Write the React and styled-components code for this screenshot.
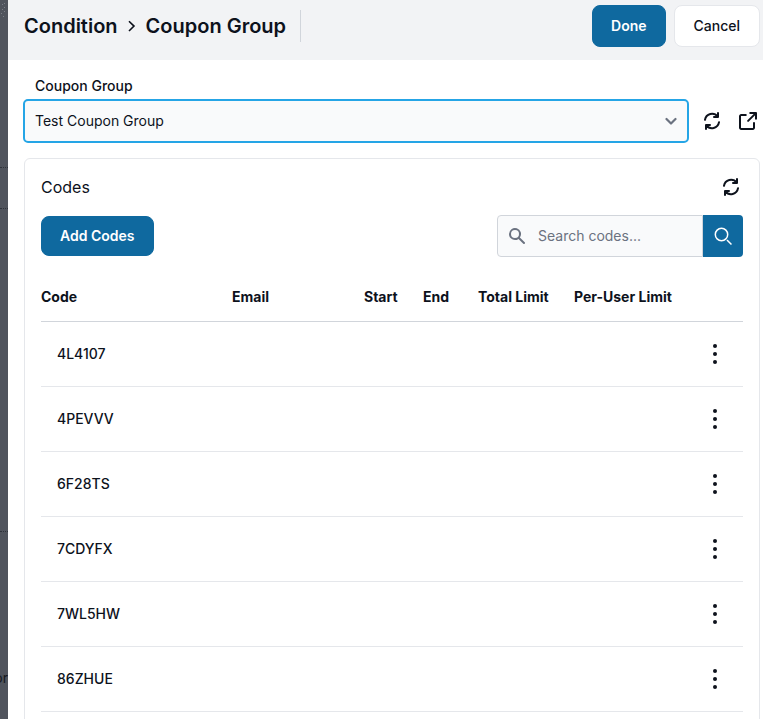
import React, { useState } from 'react';
import styled, { createGlobalStyle } from 'styled-components';

const GlobalStyle = createGlobalStyle`
    *, *::before, *::after {
        box-sizing: border-box;
    }

    body {
        margin: 0;
        font-family: Inter, "Liberation Sans", sans-serif;
        font-size: 14px;
        line-height: 20px;
        color: #0d121c;
        background-color: #ffffff;
    }

    button, input, select {
        font: inherit;
        color: inherit;
    }
`;

const Page = styled.div`
    display: grid;
    grid-template-columns: 8px minmax(0, 1fr);
    height: 100vh;
    overflow: hidden;
`;

const Backdrop = styled.div`
    display: flex;
    flex-direction: column;
    overflow: hidden;
    background-color: #50545d;
`;

const BackdropRow = styled.div`
    flex: none;
    height: ${props => props.$height};
    border-bottom: 1px dotted #2f333b;
`;

const BackdropText = styled.span`
    align-self: flex-end;
    padding-top: 136px;
    font-size: 14px;
    color: #16191f;
`;

const Drawer = styled.main`
    display: flex;
    flex-direction: column;
    min-width: 0;
    height: 100vh;
`;

const Header = styled.header`
    display: flex;
    align-items: flex-start;
    justify-content: space-between;
    flex: none;
    padding: 5px 3px 13px 16px;
    background-color: #f2f3f5;
`;

const Breadcrumb = styled.nav`
    display: flex;
    align-items: center;
    gap: 6px;
    height: 42px;
`;

const Title = styled.h1`
    margin: 0;
    font-size: 20px;
    font-weight: 600;
    line-height: 28px;
    white-space: nowrap;
`;

const Divider = styled.span`
    width: 1px;
    height: 32px;
    margin-left: 8px;
    background-color: #d1d5db;
`;

const Actions = styled.div`
    display: flex;
    gap: 8px;
`;

const Button = styled.button`
    height: ${props => props.$height || '42px'};
    padding: 0 ${props => (props.$primary ? '18px' : '19px')};
    border: 1px solid ${props => (props.$primary ? '#0f699f' : '#e5e7eb')};
    border-radius: 8px;
    background-color: ${props => (props.$primary ? '#0f699f' : '#ffffff')};
    color: ${props => (props.$primary ? '#ffffff' : '#0d121c')};
    font-weight: ${props => (props.$primary ? 600 : 500)};
    white-space: nowrap;
    cursor: pointer;
`;

const IconButton = styled.button`
    display: flex;
    padding: 0;
    border: none;
    background: none;
    cursor: pointer;
`;

const Content = styled.div`
    flex: 1;
    min-height: 0;
    padding: 16px 3px 16px 16px;
    overflow-y: auto;
    scrollbar-width: none;
`;

const Label = styled.label`
    display: block;
    padding: 0 11px;
    margin-bottom: 3px;
    font-weight: 500;
`;

const FieldRow = styled.div`
    display: flex;
    align-items: center;
    gap: 12px;
    margin-bottom: 15px;
`;

const SelectWrap = styled.div`
    position: relative;
    flex: 1;
    margin: 0 -1px;

    svg {
        position: absolute;
        top: 16px;
        right: 12px;
        pointer-events: none;
    }
`;

const Select = styled.select`
    appearance: none;
    display: block;
    width: 100%;
    height: 44px;
    padding: 0 36px 0 10px;
    border: 2px solid #25a5e6;
    border-radius: 5px;
    outline: none;
    background-color: #f9fafb;
`;

const Card = styled.section`
    padding: 16px;
    border: 1px solid #e5e7eb;
    border-radius: 6px;
`;

const CardHeader = styled.div`
    display: flex;
    align-items: center;
    justify-content: space-between;
    margin-bottom: 16px;
`;

const CardTitle = styled.h2`
    margin: 0;
    font-size: 16px;
    font-weight: 400;
    line-height: 24px;
`;

const Toolbar = styled.div`
    display: flex;
    align-items: center;
    justify-content: space-between;
`;

const SearchForm = styled.form`
    display: flex;
    width: 35%;
    min-width: 246px;
    height: 42px;
`;

const SearchBox = styled.div`
    display: flex;
    align-items: center;
    flex: 1;
    min-width: 0;
    gap: 11px;
    padding-left: 9px;
    border: 1px solid #d1d5db;
    border-radius: 4px 0 0 4px;
    background-color: #f9fafb;
    color: #6b7280;
`;

const SearchInput = styled.input`
    flex: 1;
    min-width: 0;
    padding: 0;
    border: none;
    outline: none;
    background: none;
    color: #0d121c;

    &::placeholder {
        color: #6b7280;
        opacity: 1;
    }
`;

const SearchButton = styled.button`
    display: flex;
    align-items: center;
    justify-content: center;
    width: 40px;
    padding: 0;
    border: none;
    border-radius: 0 4px 4px 0;
    background-color: #0f699f;
    color: #ffffff;
    cursor: pointer;
`;

const Table = styled.table`
    width: 100%;
    margin-top: 16px;
    border-collapse: collapse;
    table-layout: fixed;
`;

const Col = styled.col`
    width: ${props => props.$width};
`;

const Th = styled.th`
    height: 48px;
    padding: 0;
    border-bottom: 1px solid #d1d5db;
    font-weight: 700;
    text-align: left;
    white-space: nowrap;
`;

const Td = styled.td`
    height: 65px;
    padding: 0 16px;
    border-bottom: 1px solid #e5e7eb;
    font-weight: 500;
`;

const RefreshIcon = () => (
    <svg width="24" height="24" viewBox="0 0 24 24" fill="none" stroke="currentColor" strokeWidth="2" strokeLinecap="round" strokeLinejoin="round" aria-hidden="true">
        <path d="M17.651 7.65a7.131 7.131 0 0 0-12.68 3.15M18.001 4v4h-4m-7.652 8.35a7.13 7.13 0 0 0 12.68-3.15M6 20v-4h4" />
    </svg>
);

const ExternalIcon = () => (
    <svg width="24" height="24" viewBox="0 0 24 24" fill="none" stroke="currentColor" strokeWidth="2" strokeLinecap="round" strokeLinejoin="round" aria-hidden="true">
        <path d="M18 14v4.833A1.166 1.166 0 0 1 16.833 20H5.167A1.167 1.167 0 0 1 4 18.833V7.167A1.166 1.166 0 0 1 5.167 6h4.618m4.447-2H20v5.768m-7.889 2.121 7.778-7.778" />
    </svg>
);

const ChevronRight = () => (
    <svg width="16" height="16" viewBox="0 0 16 16" fill="none" stroke="currentColor" strokeWidth="1.6" aria-hidden="true">
        <path d="M5 3.2l5 4.9-5 4.9" />
    </svg>
);

const ChevronDown = () => (
    <svg width="12" height="12" viewBox="0 0 12 12" fill="none" stroke="#6b7280" strokeWidth="2.2" strokeLinecap="round" strokeLinejoin="round" aria-hidden="true">
        <path d="M1.5 4l4.5 4.5L10.5 4" />
    </svg>
);

const SearchSolidIcon = () => (
    <svg width="20" height="20" viewBox="0 0 20 20" fill="currentColor" aria-hidden="true">
        <path fillRule="evenodd" clipRule="evenodd" d="M8 4a4 4 0 100 8 4 4 0 000-8zM2 8a6 6 0 1110.89 3.476l4.817 4.817a1 1 0 01-1.414 1.414l-4.816-4.816A6 6 0 012 8z" />
    </svg>
);

const SearchOutlineIcon = () => (
    <svg width="20" height="20" viewBox="0 0 20 20" fill="none" stroke="currentColor" strokeWidth="1.5" aria-hidden="true">
        <circle cx="8.5" cy="8.5" r="6.2" />
        <path d="M14 14l4.5 4.5" />
    </svg>
);

const DotsIcon = () => (
    <svg width="24" height="24" viewBox="0 0 24 24" fill="currentColor" aria-hidden="true">
        <circle cx="12" cy="4" r="2" />
        <circle cx="12" cy="12" r="2" />
        <circle cx="12" cy="20" r="2" />
    </svg>
);

const DotPattern = () => (
    <svg width="8" height="20" viewBox="0 0 8 20" fill="#7b7f87" aria-hidden="true">
        <rect x="4" y="3" width="1" height="1" />
        <rect x="2" y="4" width="1" height="1" />
        <rect x="4" y="7" width="1" height="1" />
        <rect x="2" y="9" width="1" height="1" />
        <rect x="4" y="11" width="1" height="1" />
        <rect x="1" y="13" width="1" height="1" />
        <rect x="3" y="16" width="1" height="1" />
    </svg>
);

const columns = [
    { label: 'Code', width: '191px' },
    { label: 'Email', width: 'auto' },
    { label: 'Start', width: '59px' },
    { label: 'End', width: '55px' },
    { label: 'Total Limit', width: '96px' },
    { label: 'Per-User Limit', width: '113px' },
];

const codes = ['4L4107', '4PEVVV', '6F28TS', '7CDYFX', '7WL5HW', '86ZHUE'];

const CodesTable = ({ rows }) => (
    <Table>
        <colgroup>
            {columns.map(column => <Col key={column.label} $width={column.width} />)}
            <Col $width={'56px'} />
        </colgroup>
        <thead>
            <tr>
                {columns.map(column => <Th key={column.label} scope="col">{column.label}</Th>)}
                <Th as="td" />
            </tr>
        </thead>
        <tbody>
            {rows.map(code => (
                <tr key={code}>
                    <Td>{code}</Td>
                    <Td />
                    <Td />
                    <Td />
                    <Td />
                    <Td />
                    <Td>
                        <IconButton type="button" aria-label={`Actions for ${code}`}><DotsIcon /></IconButton>
                    </Td>
                </tr>
            ))}
        </tbody>
    </Table>
);

const App = () => {
    const [search, setSearch] = useState('');
    const rows = codes.filter(code => code.includes(search.toUpperCase()));

    return (
        <Page>
            <GlobalStyle />
            <Backdrop aria-hidden="true">
                <BackdropRow $height={'168px'}><DotPattern /></BackdropRow>
                <BackdropRow $height={'41px'} />
                <BackdropRow $height={'323px'} />
                <BackdropText>or</BackdropText>
            </Backdrop>
            <Drawer>
                <Header>
                    <Breadcrumb aria-label="Breadcrumb">
                        <Title as="span">Condition</Title>
                        <ChevronRight />
                        <Title>Coupon Group</Title>
                        <Divider />
                    </Breadcrumb>
                    <Actions>
                        <Button type="button" $primary>Done</Button>
                        <Button type="button">Cancel</Button>
                    </Actions>
                </Header>
                <Content>
                    <Label htmlFor="coupon-group">Coupon Group</Label>
                    <FieldRow>
                        <SelectWrap>
                            <Select id="coupon-group">
                                <option>Test Coupon Group</option>
                            </Select>
                            <ChevronDown />
                        </SelectWrap>
                        <IconButton type="button" aria-label="Refresh coupon groups"><RefreshIcon /></IconButton>
                        <IconButton type="button" aria-label="Open coupon group"><ExternalIcon /></IconButton>
                    </FieldRow>
                    <Card>
                        <CardHeader>
                            <CardTitle>Codes</CardTitle>
                            <IconButton type="button" aria-label="Refresh codes"><RefreshIcon /></IconButton>
                        </CardHeader>
                        <Toolbar>
                            <Button type="button" $primary $height={'40px'}>Add Codes</Button>
                            <SearchForm role="search" onSubmit={e => e.preventDefault()}>
                                <SearchBox>
                                    <SearchSolidIcon />
                                    <SearchInput
                                        type="text"
                                        aria-label="Search codes"
                                        placeholder="Search codes..."
                                        value={search}
                                        onChange={e => setSearch(e.target.value)}
                                    />
                                </SearchBox>
                                <SearchButton type="submit" aria-label="Search"><SearchOutlineIcon /></SearchButton>
                            </SearchForm>
                        </Toolbar>
                        <CodesTable rows={rows} />
                    </Card>
                </Content>
            </Drawer>
        </Page>
    );
};

export default App;
